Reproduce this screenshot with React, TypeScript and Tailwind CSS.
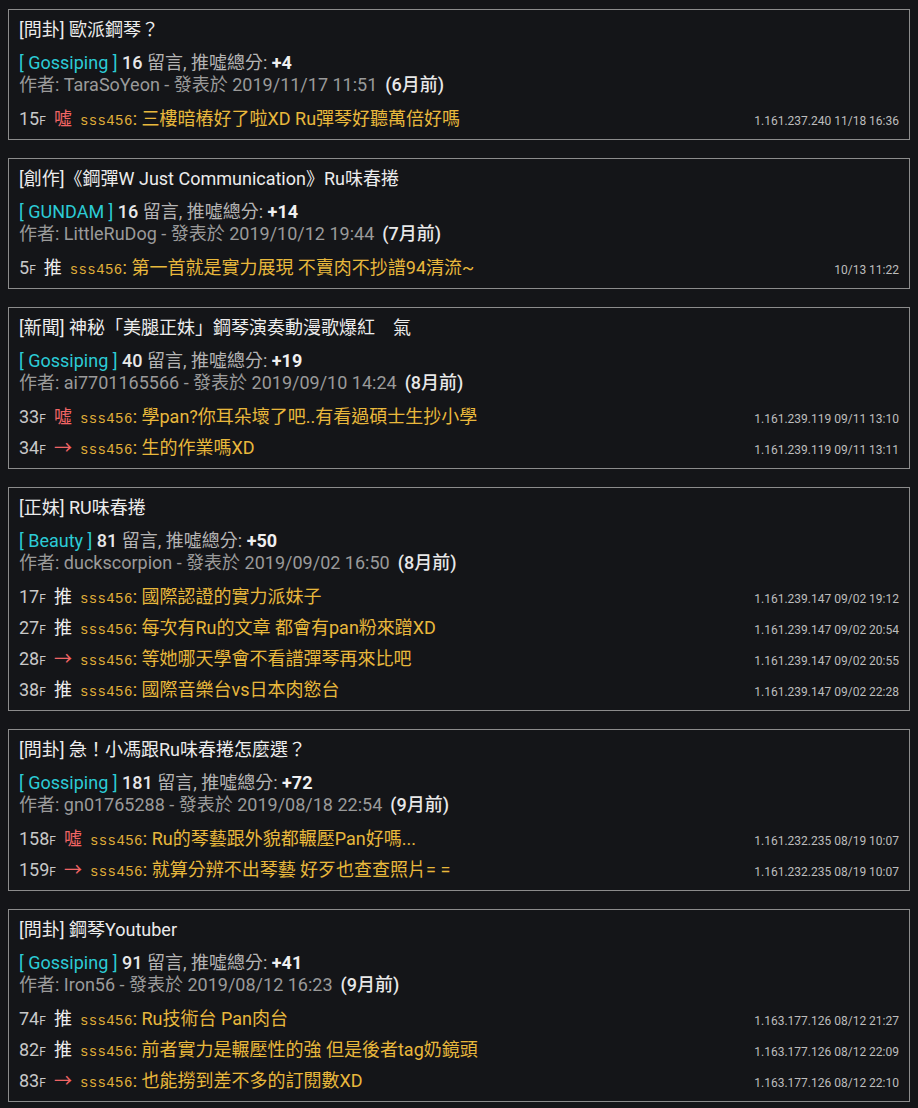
import React from "react";

type Push = {
  floor: number;
  tag: "推" | "噓" | "→";
  text: string;
  ip: string;
};

type Post = {
  title: string;
  board: string;
  count: number;
  score: string;
  author: string;
  date: string;
  ago: string;
  pushes: Push[];
};

const posts: Post[] = [
  {
    title: "[問卦] 歐派鋼琴？",
    board: "Gossiping",
    count: 16,
    score: "+4",
    author: "TaraSoYeon",
    date: "2019/11/17 11:51",
    ago: "(6月前)",
    pushes: [
      { floor: 15, tag: "噓", text: "三樓暗樁好了啦XD Ru彈琴好聽萬倍好嗎", ip: "1.161.237.240 11/18 16:36" },
    ],
  },
  {
    title: "[創作]《鋼彈W Just Communication》Ru味春捲",
    board: "GUNDAM",
    count: 16,
    score: "+14",
    author: "LittleRuDog",
    date: "2019/10/12 19:44",
    ago: "(7月前)",
    pushes: [
      { floor: 5, tag: "推", text: "第一首就是實力展現 不賣肉不抄譜94清流~", ip: "10/13 11:22" },
    ],
  },
  {
    title: "[新聞] 神秘「美腿正妹」鋼琴演奏動漫歌爆紅　氣",
    board: "Gossiping",
    count: 40,
    score: "+19",
    author: "ai7701165566",
    date: "2019/09/10 14:24",
    ago: "(8月前)",
    pushes: [
      { floor: 33, tag: "噓", text: "學pan?你耳朵壞了吧..有看過碩士生抄小學", ip: "1.161.239.119 09/11 13:10" },
      { floor: 34, tag: "→", text: "生的作業嗎XD", ip: "1.161.239.119 09/11 13:11" },
    ],
  },
  {
    title: "[正妹] RU味春捲",
    board: "Beauty",
    count: 81,
    score: "+50",
    author: "duckscorpion",
    date: "2019/09/02 16:50",
    ago: "(8月前)",
    pushes: [
      { floor: 17, tag: "推", text: "國際認證的實力派妹子", ip: "1.161.239.147 09/02 19:12" },
      { floor: 27, tag: "推", text: "每次有Ru的文章 都會有pan粉來蹭XD", ip: "1.161.239.147 09/02 20:54" },
      { floor: 28, tag: "→", text: "等她哪天學會不看譜彈琴再來比吧", ip: "1.161.239.147 09/02 20:55" },
      { floor: 38, tag: "推", text: "國際音樂台vs日本肉慾台", ip: "1.161.239.147 09/02 22:28" },
    ],
  },
  {
    title: "[問卦] 急！小馮跟Ru味春捲怎麼選？",
    board: "Gossiping",
    count: 181,
    score: "+72",
    author: "gn01765288",
    date: "2019/08/18 22:54",
    ago: "(9月前)",
    pushes: [
      { floor: 158, tag: "噓", text: "Ru的琴藝跟外貌都輾壓Pan好嗎...", ip: "1.161.232.235 08/19 10:07" },
      { floor: 159, tag: "→", text: "就算分辨不出琴藝 好歹也查查照片= =", ip: "1.161.232.235 08/19 10:07" },
    ],
  },
  {
    title: "[問卦] 鋼琴Youtuber",
    board: "Gossiping",
    count: 91,
    score: "+41",
    author: "Iron56",
    date: "2019/08/12 16:23",
    ago: "(9月前)",
    pushes: [
      { floor: 74, tag: "推", text: "Ru技術台 Pan肉台", ip: "1.163.177.126 08/12 21:27" },
      { floor: 82, tag: "推", text: "前者實力是輾壓性的強 但是後者tag奶鏡頭", ip: "1.163.177.126 08/12 22:09" },
      { floor: 83, tag: "→", text: "也能撈到差不多的訂閱數XD", ip: "1.163.177.126 08/12 22:10" },
    ],
  },
];

function PushRow({ p }: { p: Push }) {
  const tagColor = p.tag === "推" ? "text-[#eeeeee]" : "text-[#f06464]";
  return (
    <div className="flex h-[31px] items-baseline whitespace-nowrap leading-[31px]">
      <span className="text-[#c8c8c8]">
        {p.floor}
        <span className="text-[12px]">F</span>
      </span>
      <span className={`ml-[8px] ${tagColor}`}>{p.tag}</span>
      <span className="ml-[8px] font-['Liberation_Mono',monospace] text-[14px] tracking-[0.4px] text-[#e2b13a]">
        sss456
      </span>
      <span className="text-[#e8b83c]">: {p.text}</span>
      <span className="ml-auto text-[12px] text-[#bdbdbd]">{p.ip}</span>
    </div>
  );
}

function PostCard({ post }: { post: Post }) {
  return (
    <div className="border border-[#8c8c8c] px-[10px] pt-[8px] pb-[5px]">
      <div className="h-[24px] leading-[24px] text-[#ececec]">{post.title}</div>
      <div className="mt-[10px] h-[22px] leading-[22px]">
        <span className="text-[#2ccbd6]">[ {post.board} ]</span>{" "}
        <span className="font-medium text-[#e8e8e8]">{post.count}</span>{" "}
        <span className="text-[#b4b4b4]">留言, 推噓總分:</span>{" "}
        <span className="font-bold text-[#f0f0f0]">{post.score}</span>
      </div>
      <div className="h-[22px] leading-[22px] text-[#9a9a9a]">
        作者: {post.author} - 發表於 {post.date}
        <span className="ml-[8px] font-medium text-[#e8e8e8]">{post.ago}</span>
      </div>
      <div className="mt-[7px]">
        {post.pushes.map((p, i) => (
          <PushRow key={i} p={p} />
        ))}
      </div>
    </div>
  );
}

export default function App() {
  return (
    <div className="min-h-screen bg-[#141518] px-[8px] pt-[9px] pb-[8px] font-['Roboto','Noto_Sans_CJK_TC',sans-serif] text-[18px]">
      <div className="flex flex-col gap-[18px]">
        {posts.map((post, i) => (
          <PostCard key={i} post={post} />
        ))}
      </div>
    </div>
  );
}
